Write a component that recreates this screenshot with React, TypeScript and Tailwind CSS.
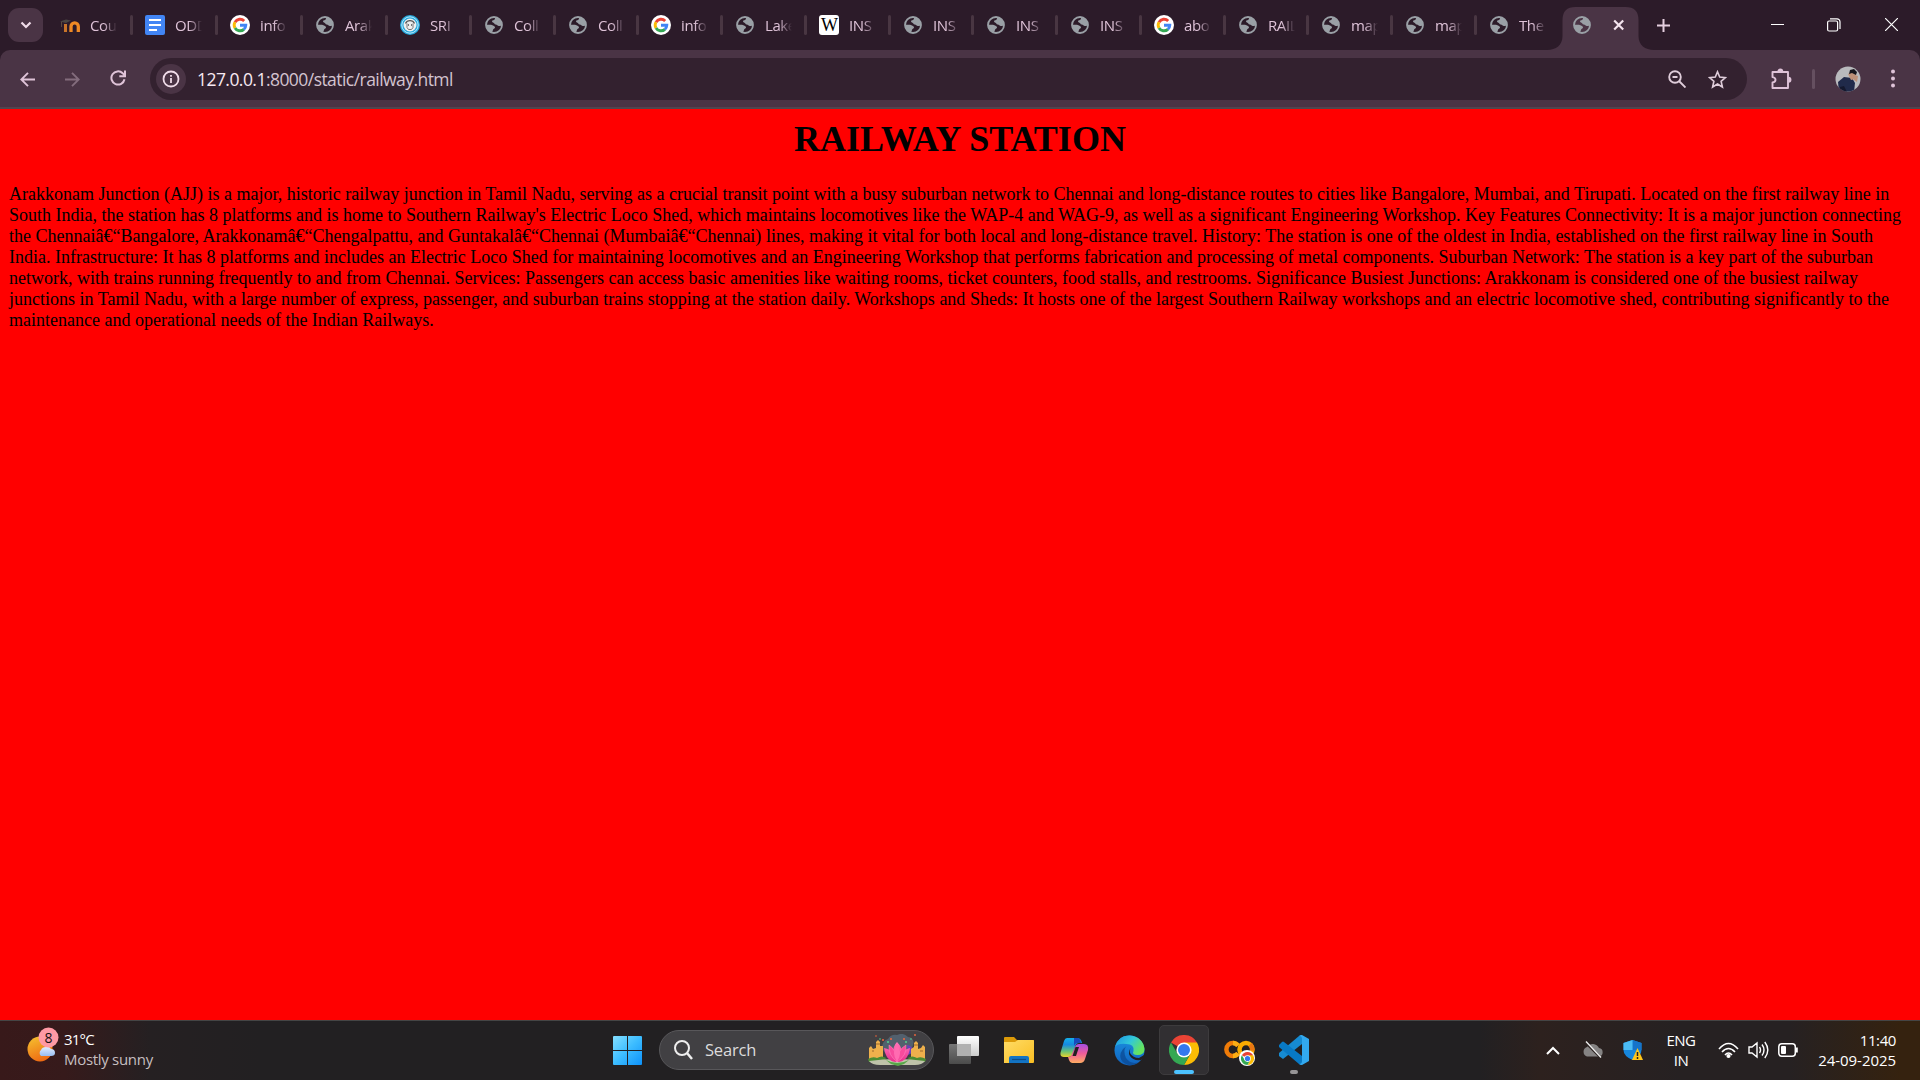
import React from "react";

const ui = "font-['Open_Sans','Noto_Sans',sans-serif]";

function Globe() {
  return (
    <svg width="18" height="18" viewBox="0 0 18 18" className="mx-px shrink-0">
      <circle cx="9" cy="9" r="8" fill="none" stroke="#9aa0a6" strokeWidth="1.8" />
      <path d="M10 1.200C10.300 3 9.600 4 8.200 4.200 6.800 4.400 6.600 6 8 6.400c1.500.4 1.200 1.800 2.700 2 1.600 0 1.800 1.800 3.400 1.600 1.600-.2 2-.2 3-.5C17.200 5 14 1.500 10 1.200Z" fill="#9aa0a6" />
      <path d="M1.200 8.500c2 .4 4.600-.1 6.200.7 1.600.8 2.800 1.200 2.600 2.600-.2 1-2 1-2 2.200 0 .8-.8 1.200-.8 2.600C3.500 15.600.9 12.500 1.200 8.500Z" fill="#9aa0a6" />
    </svg>
  );
}

function Google() {
  return (
    <svg width="20" height="20" viewBox="0 0 20 20" className="shrink-0">
      <circle cx="10" cy="10" r="10" fill="#fff" />
      <g fill="none" strokeWidth="2.900">
        <path d="M5 7.200A5.800 5.800 0 0 1 14.200 6" stroke="#ea4335" />
        <path d="M5 12.900A5.800 5.800 0 0 1 5 7.100" stroke="#fbbc05" />
        <path d="M13.900 14.300A5.800 5.800 0 0 1 5 12.900" stroke="#34a853" />
        <path d="M10 10.200h5.800a5.800 5.800 0 0 1-2 4.200" stroke="#4285f4" />
      </g>
    </svg>
  );
}

function Docs() {
  return (
    <svg width="20" height="20" viewBox="0 0 20 20" className="shrink-0">
      <rect width="20" height="20" rx="2" fill="#4285f4" />
      <path d="M4 5h12M4 10h12M4 15h8" stroke="#fff" strokeWidth="2" />
    </svg>
  );
}

function Moodle() {
  return (
    <svg width="20" height="20" viewBox="0 0 20 20" className="shrink-0">
      <path d="M0 6.500 6 4.500l5 1-5 2.500Z" fill="#4a4644" />
      <path d="M1.500 7v5" stroke="#5b4a40" strokeWidth="1" />
      <path d="M5.500 17V9" fill="none" stroke="#c8742a" strokeWidth="3" />
      <path d="M11 17v-5.500a3.500 3.500 0 0 1 7.300 0V17" fill="none" stroke="#f08a24" strokeWidth="3.300" />
    </svg>
  );
}

function Seal() {
  return (
    <svg width="20" height="20" viewBox="0 0 20 20" className="shrink-0">
      <circle cx="10" cy="10" r="10" fill="#26a9dc" />
      <circle cx="10" cy="10" r="8.200" fill="none" stroke="#bdeaff" strokeWidth="1" />
      <circle cx="10" cy="10" r="6.500" fill="#eee" />
      <path d="M5.500 8.500a5 5 0 0 1 9 0" fill="none" stroke="#555" strokeWidth="1.300" />
      <path d="M7 8.500v4l1.500 2h3l1.500-2v-4M8.500 9v2M11.500 9v2" fill="none" stroke="#777" strokeWidth="1" />
    </svg>
  );
}

function Wiki() {
  return (
    <div className="flex h-5 w-5 shrink-0 items-center justify-center rounded-[3px] bg-white">
      <span className="font-['Liberation_Serif',serif] text-[18px] leading-5 tracking-tighter text-black">W</span>
    </div>
  );
}

const icons = { globe: Globe, google: Google, docs: Docs, moodle: Moodle, seal: Seal, wiki: Wiki };

const tabs: { t: string; k: keyof typeof icons; w: number }[] = [
  { t: "Cou", k: "moodle", w: 85 },
  { t: "ODD", k: "docs", w: 85 },
  { t: "info", k: "google", w: 85 },
  { t: "Arak", k: "globe", w: 85 },
  { t: "SRI", k: "seal", w: 84 },
  { t: "Coll", k: "globe", w: 84 },
  { t: "Coll", k: "globe", w: 83 },
  { t: "info", k: "google", w: 84 },
  { t: "Lake", k: "globe", w: 84 },
  { t: "INS", k: "wiki", w: 84 },
  { t: "INS", k: "globe", w: 83 },
  { t: "INS", k: "globe", w: 84 },
  { t: "INS", k: "globe", w: 84 },
  { t: "abo", k: "google", w: 84 },
  { t: "RAIL", k: "globe", w: 83 },
  { t: "map", k: "globe", w: 84 },
  { t: "map", k: "globe", w: 84 },
  { t: "The", k: "globe", w: 84 },
];

function TabStrip() {
  return (
    <div className="flex h-[50px] items-start bg-[#2c1b29]">
      <div className="mt-2 ml-2 flex h-[34px] w-[35px] items-center justify-center rounded-[11px] bg-[#4a3445]">
        <svg width="12" height="8" viewBox="0 0 12 8" fill="none" stroke="#f0dce9" strokeWidth="2.200"><path d="m1.500 1.500 4.500 4.500 4.500-4.500" /></svg>
      </div>
      <div className="ml-[3px] flex h-[50px] items-center">
        {tabs.map((tab, i) => {
          const Icon = icons[tab.k];
          return (
            <div key={i} className="flex h-5 shrink-0 items-center" style={{ width: tab.w }}>
              <div className="ml-[14px] flex w-5"><Icon /></div>
              <div className="ml-[10px] w-[27px] overflow-hidden text-[15px] leading-5 tracking-[-0.4px] whitespace-nowrap text-[#dfc3d8] [mask-image:linear-gradient(to_right,black_50%,transparent)]">{tab.t}</div>
              <div className={i === tabs.length - 1 ? "hidden" : "ml-auto h-5 w-[3px] translate-x-[2px] rounded-full bg-[#493642]"} />
            </div>
          );
        })}
      </div>
      <svg width="108" height="50" viewBox="0 0 108 50" className="-ml-[12px] shrink-0">
        <path d="M0 50c9 0 15.500-5 15.500-14V20q0-13 13-13h50q13 0 13 13v16c0 9 6.500 14 15.500 14Z" fill="#4a3445" />
        <svg x="26" y="16" width="18" height="18"><Globe /></svg>
        <path d="m67.200 20.500 9 9m0-9-9 9" stroke="#f4e4ee" strokeWidth="2.200" />
      </svg>
      <svg width="13" height="13" viewBox="0 0 13 13" className="mt-[19px] ml-[2px]"><path d="M6.500 0v13M0 6.500h13" stroke="#e5cfdf" strokeWidth="2" /></svg>
      <div className="mr-[22px] ml-auto flex h-[50px] items-center text-white">
        <svg width="13" height="13" viewBox="0 0 13 13"><path d="M0 5.500h13" stroke="#fff" /></svg>
        <svg width="14" height="14" viewBox="0 0 14 14" className="ml-[43px]" fill="none" stroke="#fff" strokeWidth="1.200"><rect x=".6" y="3" width="10" height="10" rx="1.500" /><path d="M3 .8h7a3 3 0 0 1 3 3V11" /></svg>
        <svg width="13" height="13" viewBox="0 0 13 13" className="ml-[44px] -translate-y-[1px]"><path d="m0 0 13 13m0-13L0 13" stroke="#fff" strokeWidth="1.200" /></svg>
      </div>
    </div>
  );
}

function Toolbar() {
  return (
    <div className="bg-[#2c1b29]">
      <div className="flex h-[59px] items-start rounded-t-[10px] border-b-2 border-[#51464f] bg-[#4a3445] pt-2">
        <div className="flex h-[42px] items-center pl-5">
          <svg width="15" height="15" viewBox="0 0 15 15" fill="none" stroke="#dfc3d8" strokeWidth="1.900"><path d="M15 7.500H1.500M8 .8 1.300 7.500 8 14.200" /></svg>
          <svg width="15" height="15" viewBox="0 0 15 15" className="ml-[30px]" fill="none" stroke="#836c7d" strokeWidth="1.900"><path d="M0 7.500h13.500M7 .8l6.700 6.700L7 14.200" /></svg>
          <svg width="16" height="16" viewBox="0 0 16 16" className="ml-[30px] -translate-y-[1px]" fill="none" stroke="#dfc3d8" strokeWidth="2"><path d="M14.500 9.200A6.600 6.600 0 1 1 12.700 3.300L14.500 5M15 .5v5.700H9.300" /></svg>
        </div>
        <div className="ml-[24px] flex h-[42px] w-[1597px] items-center rounded-full bg-[#33212f] pl-[6px]">
          <div className="flex h-[30px] w-[30px] items-center justify-center rounded-full bg-[#4a3445]">
            <svg width="18" height="18" viewBox="0 0 18 18" fill="none" stroke="#f0dce9" strokeWidth="1.800"><circle cx="9" cy="9" r="7.500" /><path d="M9 8v5M9 5v1.800" /></svg>
          </div>
          <div className="ml-[11px] text-[17.500px] leading-6 tracking-[-0.550px] whitespace-nowrap text-[#d3c3cf]"><span className="text-[#f7e9f2]">127.0.0.1</span>:8000/static/railway.html</div>
          <svg width="18" height="18" viewBox="0 0 18 18" className="ml-auto" fill="none" stroke="#dfcdda" strokeWidth="1.900"><circle cx="7" cy="7" r="5.800" /><path d="m11 11 6.500 6.500M4.500 7h5" /></svg>
          <svg width="19" height="19" viewBox="0 0 19 19" className="mr-[20px] ml-[22px]" fill="none" stroke="#dfcdda" strokeWidth="1.600"><path d="m9.500 1.800 2.200 5.300 5.700.5-4.300 3.700 1.300 5.700-4.900-3-4.900 3 1.300-5.700-4.300-3.700 5.700-.5Z" /></svg>
        </div>
        <div className="flex h-[42px] items-center">
          <svg width="22" height="22" viewBox="0 0 22 22" className="ml-[23px]" fill="none" stroke="#dfc3d8" strokeWidth="1.900" strokeLinejoin="round"><path d="M2.500 4h15.500v16h-15.500v-5.500q3-.4 3-2.700t-3-2.700Z" /><path d="M8.300 3.500a2 2 0 0 1 4 0M18.500 9.800a2 2 0 0 1 0 4" fill="#dfc3d8" /></svg>
          <div className="ml-[20px] h-5 w-[3px] rounded bg-[#655060]" />
          <svg width="26" height="26" viewBox="0 0 26 26" className="ml-[20px]">
            <defs><clipPath id="face"><circle cx="13" cy="13" r="12.500" /></clipPath></defs>
            <g clipPath="url(#face)"><path d="M0 0h26v26H0Z" fill="#b9babd" /><path d="m4 26-1-10 6-5 8 1 3 5-1 9Z" fill="#202a4a" /><path d="m13 8 3-2 5 2-1 5-4 1ZM19 14l1-5 3 1-1 6Z" fill="#bd9078" /><path d="m14 8 1-4 4-1 3 3-1 3-4-2Z" fill="#15151c" /><path d="m5 21 4-1 3 6H5Z" fill="#14182d" /></g>
          </svg>
          <svg width="4" height="20" viewBox="0 0 4 20" className="ml-[30px]" fill="#dfc3d8"><circle cx="2" cy="2.500" r="2" /><circle cx="2" cy="9.500" r="2" /><circle cx="2" cy="16.500" r="2" /></svg>
        </div>
      </div>
    </div>
  );
}

const lines: [string, number][] = [
  ["Arakkonam Junction (AJJ) is a major, historic railway junction in Tamil Nadu, serving as a crucial transit point with a busy suburban network to Chennai and long-distance routes to cities like Bangalore, Mumbai, and Tirupati. Located on the first railway line in", 1880],
  ["South India, the station has 8 platforms and is home to Southern Railway's Electric Loco Shed, which maintains locomotives like the WAP-4 and WAG-9, as well as a significant Engineering Workshop. Key Features Connectivity: It is a major junction connecting", 1892],
  ["the Chennaiâ€“Bangalore, Arakkonamâ€“Chengalpattu, and Guntakalâ€“Chennai (Mumbaiâ€“Chennai) lines, making it vital for both local and long-distance travel. History: The station is one of the oldest in India, established on the first railway line in South", 1864],
  ["India. Infrastructure: It has 8 platforms and includes an Electric Loco Shed for maintaining locomotives and an Engineering Workshop that performs fabrication and processing of metal components. Suburban Network: The station is a key part of the suburban", 1864],
  ["network, with trains running frequently to and from Chennai. Services: Passengers can access basic amenities like waiting rooms, ticket counters, food stalls, and restrooms. Significance Busiest Junctions: Arakkonam is considered one of the busiest railway", 1849],
  ["junctions in Tamil Nadu, with a large number of express, passenger, and suburban trains stopping at the station daily. Workshops and Sheds: It hosts one of the largest Southern Railway workshops and an electric locomotive shed, contributing significantly to the", 1880],
  ["maintenance and operational needs of the Indian Railways.", 424],
];

function Page() {
  return (
    <main className="h-[911px] bg-[#ff0000] px-[9px] pt-[9px] font-['Liberation_Serif',serif] text-black">
      <h1 className="text-center text-[36px] leading-[42px] font-bold">RAILWAY STATION</h1>
      <div className="mt-[24px] text-[18px] leading-[21px]">
        {lines.map(([text, w]) => (
          <p key={text} className="h-[21px] whitespace-nowrap [text-align-last:justify]" style={{ width: w }}>{text}</p>
        ))}
      </div>
    </main>
  );
}

function Chrome({ size }: { size: number }) {
  return (
    <svg width={size} height={size} viewBox="0 0 30 30">
      <path d="M15 15 2 7.500A15 15 0 0 1 28 7.500Z" fill="#ea4335" />
      <path d="M15 7.500h13A15 15 0 0 1 15 30l6.500-11.200Z" fill="#fbbc05" />
      <path d="M2 7.500 8.500 18.700 15 22.500l5.500-2.200L15 30A15 15 0 0 1 2 7.500Z" fill="#34a853" />
      <circle cx="15" cy="15" r="7.600" fill="#fff" /><circle cx="15" cy="15" r="6" fill="#3478ee" />
    </svg>
  );
}

function Lotus() {
  return (
    <svg width="58" height="32" viewBox="0 0 58 32">
      <defs><linearGradient id="petal" x2="0" y2="1"><stop stopColor="#ff78bd" /><stop offset="1" stopColor="#e92e8c" /></linearGradient></defs>
      <path d="M14 14q0-7 6-9 3-5 9-4 6-3 11 2 7 1 5 8l-3 8H17Z" fill="#52606d" />
      <path d="M39 11q6 1 7 7l-6 3Z" fill="#6840bd" />
      <path d="M1 24V14l2-2 2 3 3-1V8l2-2 2 2v4h3v13H1ZM57 24V13l-2-2-2 3-3 1V9l-2-2-2 2v4l-3 2v10h14Z" fill="#eeb04c" />
      <path d="M8 10h4M4 17h2M46 11h4M52 17h3" stroke="#9c692d" strokeWidth="1.200" />
      <path d="M0 25q5-3 9-1 5-3 9 0l-2 4H1ZM58 25q-5-3-9-1-5-3-9 0l2 4h15Z" fill="#4b8c32" />
      <path d="M1 27q28-4 56 0-3 4-10 4H12Q4 31 1 27Z" fill="#bfc3aa" />
      <path d="M18 26q11 6 23 0l-5 4-6 2-7-2Z" fill="#56a847" />
      <path d="M29 28Q18 28 16 14q6 1 9 5 0-7 4-11 5 5 5 11 3-4 8-5-2 14-13 14Z" fill="url(#petal)" />
      <path d="M29 28q-9-7-8-17 7 4 8 17 1-13 9-17 1 11-9 17Z" fill="#f74b9d" stroke="#ff8ac2" strokeWidth=".5" />
      <path d="M29 28q-6-9 0-19 6 10 0 19Z" fill="#ff6bb1" />
      <g fill="#f4683c"><circle cx="8" cy="2" r=".8" /><circle cx="15" cy="6" r="1" /><circle cx="47" cy="1" r=".9" /><circle cx="36" cy="5" r="1" /><circle cx="23" cy="5" r="1" /></g>
      <g fill="#53d38d"><circle cx="12" cy="5" r=".8" /><circle cx="20" cy="8" r="1" /><circle cx="38" cy="8" r="1" /><circle cx="43" cy="5" r=".8" /></g>
    </svg>
  );
}

function Taskbar() {
  return (
    <footer className="relative h-[60px] border-t border-[#454545] bg-[linear-gradient(90deg,#38191a_0,#361a1b_65px,#252022_150px,#222022_260px,#222022_1480px,#2d211e_1540px,#262122_1680px,#262122_1790px,#35220f_1900px)] text-white">
      <div className="absolute top-0 left-[27px] flex">
        <svg width="34" height="50" viewBox="0 0 34 50">
          <defs>
            <linearGradient id="sun" x1=".3" y1="0" x2=".7" y2="1"><stop stopColor="#f5bb2e" /><stop offset="1" stopColor="#ee6510" /></linearGradient>
            <linearGradient id="cloud" x2="0" y2="1"><stop stopColor="#e5efff" /><stop offset="1" stopColor="#98bdf0" /></linearGradient>
          </defs>
          <circle cx="13" cy="28" r="12.500" fill="url(#sun)" />
          <path d="M14 35a4 4 0 0 1 0-6q1-3 5-3 3-1 5 2 4 0 4 4 0 3-4 3Z" fill="url(#cloud)" />
          <circle cx="21.500" cy="16.500" r="10" fill="#ff99a4" />
          <text x="21.500" y="21.500" textAnchor="middle" fontSize="14" fill="#161011">8</text>
        </svg>
        <div className="mt-[8px] ml-[3px] text-[15px] leading-5 tracking-[-0.300px] whitespace-nowrap"><div className="tracking-[-0.800px]">31°C</div><div className="text-[#c6bfc0]">Mostly sunny</div></div>
      </div>

      <div className="flex h-[58px] items-center pl-[613px]">
        <svg width="29" height="29" viewBox="0 0 29 29">
          <defs><linearGradient id="win" x2="1" y2="1"><stop stopColor="#84dfff" /><stop offset=".5" stopColor="#3cbcff" /><stop offset="1" stopColor="#0d91fa" /></linearGradient></defs>
          <path d="M1 0h13v14H0V1q0-1 1-1ZM15 0h13q1 0 1 1v13H15ZM0 15h14v14H1q-1 0-1-1ZM15 15h14v13q0 1-1 1H15Z" fill="url(#win)" />
        </svg>
        <div className="ml-[17px] flex h-10 w-[275px] items-center rounded-full border border-[#58575a] bg-[#414043] pr-[7px] pl-[14px]">
          <svg width="19" height="20" viewBox="0 0 19 20" fill="none" stroke="#eee" strokeWidth="2"><circle cx="8" cy="8" r="7" /><path d="m13 13 5 6" strokeWidth="2.500" /></svg>
          <span className="ml-[12px] pt-px text-[16.500px] tracking-[-0.200px] text-[#dcdcdc]">Search</span>
          <div className="ml-auto"><Lotus /></div>
        </div>
        <svg width="30" height="28" viewBox="0 0 30 28" className="ml-[15px]">
          <defs><linearGradient id="tv" x2="0" y2="1"><stop stopColor="#fff" /><stop offset="1" stopColor="#ccc" /></linearGradient><linearGradient id="tv2" x2="0" y2="1"><stop stopColor="#777" /><stop offset="1" stopColor="#4b4b4b" /></linearGradient></defs>
          <rect y="8" width="22" height="20" rx="1" fill="url(#tv2)" /><rect x="8" y="0" width="22" height="20" rx="1" fill="url(#tv)" /><path d="M8 8h14v12H8Z" fill="#b0b0b0" />
        </svg>
        <svg width="30" height="28" viewBox="0 0 30 28" className="ml-[25px]">
          <defs><linearGradient id="fold" x2="1" y2="1"><stop stopColor="#ffdc66" /><stop offset="1" stopColor="#f9be23" /></linearGradient></defs>
          <path d="M0 2Q0 1 1 1h9l3 3h16q1 0 1 1v9H0Z" fill="#dc9a08" /><path d="M0 6h11l3-2h15q1 0 1 1v21q0 1-1 1H0Z" fill="url(#fold)" /><path d="M5 27v-5q0-2 2-2h16q2 0 2 2v5Z" fill="#1374c4" /><path d="M8 23.500h14" stroke="#0d4c87" strokeWidth="1.200" />
        </svg>
        <svg width="30" height="28" viewBox="0 0 30 28" className="ml-[26px]">
          <defs>
            <linearGradient id="co1" x2="0" y2="1"><stop stopColor="#15afe9" /><stop offset=".35" stopColor="#1689e0" /><stop offset=".7" stopColor="#68c276" /><stop offset="1" stopColor="#e8d52d" /></linearGradient>
            <linearGradient id="co2" x2="0" y2="1"><stop stopColor="#a64ee3" /><stop offset=".5" stopColor="#ef5c99" /><stop offset="1" stopColor="#ffad62" /></linearGradient>
          </defs>
          <path d="M7 2h10q4 0 5 5h-3q-3 0-4 4l-2 6q-1 4-5 4H4q-5 0-3-6l3-10q1-3 3-3Z" fill="url(#co1)" />
          <path d="M14 2h4q2 0 3 5h-3q-3 0-4 3Z" fill="#1749bc" />
          <path d="M24 8q5 0 4 6l-3 9q-1 4-5 4h-8q-2 0-3-3l-1-3q3 0 4-3l3-7q1-3 4-3Z" fill="url(#co2)" /><path d="M15.500 11h3.500l-3 9h-3.500Z" fill="#222022" />
        </svg>
        <svg width="31" height="31" viewBox="0 0 31 31" className="ml-[24px]">
          <defs><linearGradient id="e1" x1="0" x2="1" y2=".5"><stop stopColor="#1b90e5" /><stop offset=".55" stopColor="#32c8d8" /><stop offset="1" stopColor="#65e45d" /></linearGradient><linearGradient id="e2" x2="0" y2="1"><stop stopColor="#1b92e2" /><stop offset="1" stopColor="#1063c0" /></linearGradient></defs>
          <circle cx="15.500" cy="15.500" r="15" fill="url(#e2)" />
          <path d="M1 12Q4 0 16 .5 29 2 30.500 14q0 6-7 6-6 0-4-4 1-7-7-7Q4 8 1 12Z" fill="url(#e1)" />
          <path d="M14 10q-6 4-2 13 5 7 13 4-7 6-15 1-7-6-1-14Z" fill="#0b4a93" opacity=".75" />
          <path d="M18 12q-3 2-2 6 3 5 9 5l5-3 1 2-4 3q-8 1-11-4-3-5 2-9Z" fill="#222022" />
        </svg>
        <div className="relative ml-[14px] flex h-[50px] w-[50px] items-center justify-center rounded-[5px] border border-[#3d3b3d] bg-[#312f32]">
          <Chrome size={30} /><div className="absolute bottom-0 h-1 w-5 rounded-full bg-[#4cc2ff]" />
        </div>
        <div className="relative ml-[15px] h-[30px] w-[32px]">
          <svg width="32" height="30" viewBox="0 0 32 30" fill="none" strokeWidth="4.500"><path d="M14 10.500A6.500 6.500 0 1 0 14 18.500" stroke="#ef7b08" /><path d="M9 8a6.500 6.500 0 0 1 5 2.500M14 18.500a6.500 6.500 0 0 1-5 2.500" stroke="#fbad14" /><circle cx="22" cy="14.500" r="6.500" stroke="#f9ab00" /><path d="M26 9.500a6.500 6.500 0 0 1 2 6" stroke="#e87712" /></svg>
          <div className="absolute top-[15px] left-[15px] flex h-[16px] w-[16px] items-center justify-center rounded-full bg-white"><Chrome size={13} /></div>
        </div>
        <div className="relative ml-[23px] h-[30px] w-[31px]">
          <svg width="31" height="30" viewBox="0 0 31 30"><path d="M23 0v9L4 24l-4-3v-3L20 1Z" fill="#168bd2" /><path d="m0 10 3-3q1-1 2 0l18 14v9l-3-1L0 12Z" fill="#0879c5" /><path d="M20 1q1-1 3-1l7 4v22l-7 4q-2 0-3-1 3 0 3-3V4q0-3-3-3Z" fill="#32a9ef" /></svg>
          <div className="absolute top-[35px] left-[11px] h-1 w-2 rounded-full bg-[#969496]" />
        </div>
      </div>

      <div className="absolute top-0 right-[24px] flex h-[58px] items-center">
        <svg width="14" height="9" viewBox="0 0 14 9" fill="none" stroke="#fff" strokeWidth="2"><path d="m1 8 6-6 6 6" /></svg>
        <svg width="22" height="18" viewBox="0 0 22 18" className="ml-[22px]"><path d="M5 15.500a5 5 0 0 1 0-9.500 7 7 0 0 1 12 1 4.300 4.300 0 0 1 0 8.500Z" fill="#858383" /><path d="m3 1 16 16" stroke="#29211f" strokeWidth="2.400" /><path d="m4 .5 15 16" stroke="#eee" strokeWidth="1.400" /></svg>
        <svg width="21" height="21" viewBox="0 0 21 21" className="ml-[19px]"><path d="m9.500 0 9 3v7q0 6-9 10Q.5 16 .5 10V3Z" fill="#1686dc" /><path d="m9.500 0 9 3v7h-9Z" fill="#1574ca" /><path d="M.5 3 9.500 0v10h-9Z" fill="#4bbcf5" /><path d="m14.500 8 5.500 12H9Z" fill="#ffc61a" /><path d="M14.500 12v4M14.500 17v2" stroke="#222" strokeWidth="1.500" /></svg>
        <div className="ml-[21px] w-[32px] text-center text-[15px] leading-5 tracking-[-0.500px]">ENG<br />IN</div>
        <svg width="21" height="17" viewBox="0 0 21 17" className="ml-[21px]" fill="none" stroke="#fff" strokeWidth="1.600"><path d="M1 7q9.500-11 19 0M4 10q6.500-7 13 0M7 13q3.500-4 7 0" /><circle cx="10.500" cy="14" r="1.300" fill="#fff" /></svg>
        <svg width="21" height="18" viewBox="0 0 21 18" className="ml-[9px]" fill="none" stroke="#fff" strokeWidth="1.400"><path d="M1 6h3l5-4v14l-5-4H1ZM11.500 6q2 3 0 6M14 3.500q4 5.500 0 11M16.800 1q6 8 0 16" /></svg>
        <svg width="21" height="14" viewBox="0 0 21 14" className="ml-[9px]"><rect x=".8" y=".8" width="16.500" height="12.400" rx="3" fill="none" stroke="#fff" strokeWidth="1.500" /><rect x="3" y="3" width="5" height="8" rx="1" fill="#fff" /><path d="M18.800 4.500v5" stroke="#fff" strokeWidth="2" /></svg>
        <div className="ml-[19px] w-[78px] text-right text-[15px] leading-5 tracking-[-0.050px] whitespace-nowrap"><div className="tracking-[-0.400px]">11:40</div><div>24-09-2025</div></div>
      </div>
    </footer>
  );
}

export default function App() {
  return (
    <div className={`h-[1080px] w-[1920px] overflow-hidden bg-[#2c1b29] ${ui}`}>
      <TabStrip />
      <Toolbar />
      <Page />
      <Taskbar />
    </div>
  );
}
